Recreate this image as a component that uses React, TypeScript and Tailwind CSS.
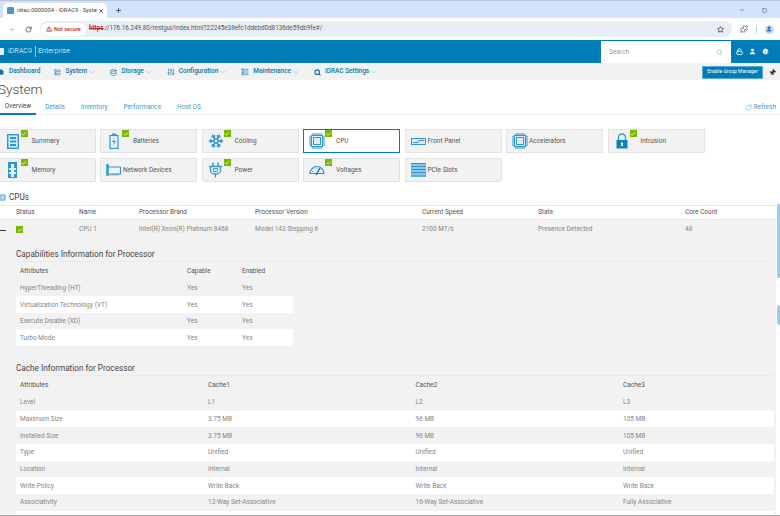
import { ReactNode } from "react";
import {
  ArrowRight,
  RotateCw,
  Star,
  Puzzle,
  Search,
  User,
  LockOpen,
  Info,
  Pin,
  ChevronDown,
  House,
  Database,
  SlidersVertical,
  LayoutList,
  Snowflake,
  Plus,
  X,
  Minus,
  Square,
  Check,
  TriangleAlert,
} from "lucide-react";

const blue = "#2f96d2";

const ChipIcon = ({ size = 16 }: { size?: number }) => (
  <svg width={size} height={size} viewBox="0 0 16 16" fill="none" stroke={blue}>
    <rect x="2.5" y="2.5" width="11" height="11" strokeWidth="1.2" />
    <rect x="4.5" y="4.5" width="7" height="7" strokeWidth="1" fill="#d9edf8" />
    <path d="M4 0v2M6 0v2M8 0v2M10 0v2M12 0v2M4 14v2M6 14v2M8 14v2M10 14v2M12 14v2M0 4h2M0 6h2M0 8h2M0 10h2M0 12h2M14 4h2M14 6h2M14 8h2M14 10h2M14 12h2" strokeWidth="1" />
  </svg>
);

const SummaryIcon = () => (
  <svg width="12" height="15" viewBox="0 0 12 15" fill="none">
    <rect x="0.7" y="0.7" width="10.6" height="13.6" stroke={blue} strokeWidth="1.4" fill="#d9edf8" />
    <path d="M3 4h6M3 7.500h6M3 11h6" stroke={blue} strokeWidth="2" />
  </svg>
);

const BatteryIcon = () => (
  <svg width="10" height="16" viewBox="0 0 10 16" fill="none">
    <rect x="3" y="0.5" width="4" height="2" fill={blue} />
    <rect x="1" y="2.5" width="8" height="13" stroke={blue} strokeWidth="1.2" fill="#eaf5fb" />
    <path d="M6 5 3 9h2l-1 4 3-5H5z" fill={blue} />
  </svg>
);

const MemoryIcon = () => (
  <svg width="9" height="16" viewBox="0 0 9 16">
    <rect x="0" y="0" width="9" height="16" fill={blue} />
    <path d="M3 2h3v4h2v2H6v2h2v2H6v3H3v-3H1v-2h2V8H1V6h2z" fill="#e4f2fa" />
  </svg>
);

const NetworkIcon = () => (
  <svg width="16" height="14" viewBox="0 0 16 14" fill="none" stroke={blue}>
    <path d="M1.5 2.5 3 4h11.500v7H4l-1 1.500" strokeWidth="1.100" />
    <rect x="0.500" y="1.500" width="2" height="11" fill={blue} strokeWidth="0.500" />
    <path d="M6 11v1.500M8 11v1.500M10 11v1.500M12 11v1.500" strokeWidth="1" />
  </svg>
);

const PowerIcon = () => (
  <svg width="15" height="16" viewBox="0 0 15 16" fill="none" stroke={blue}>
    <path d="M5 0.500v4M10 0.500v4" strokeWidth="1.500" />
    <path d="M1 4.500h13M2.500 4.500v3.500a4 4 0 0 0 4 4h2a4 4 0 0 0 4-4V4.500M7.500 12v3.500" strokeWidth="1.300" />
    <rect x="5.500" y="6.500" width="4" height="3" fill="#cfe7f5" strokeWidth="0.800" />
  </svg>
);

const GaugeIcon = () => (
  <svg width="16" height="12" viewBox="0 0 16 12" fill="none" stroke={blue}>
    <path d="M1 9.500a7 7 0 0 1 14 0z" strokeWidth="1.200" fill="#eaf5fb" />
    <path d="M11 4 7 11" strokeWidth="1.500" stroke="#1d6fa5" />
    <path d="M3 7.500h1.500M5 4.500l.8.800M8 3.500v1.300" strokeWidth="0.800" />
  </svg>
);

const FrontPanelIcon = () => (
  <svg width="15" height="7" viewBox="0 0 15 7" fill="none">
    <rect x="0.500" y="0.500" width="14" height="6" stroke={blue} fill="#d9edf8" />
    <path d="M2 4.500h5l1-2h5" stroke={blue} strokeWidth="1" />
  </svg>
);

const SlotsIcon = () => (
  <svg width="15" height="14" viewBox="0 0 15 14">
    <rect x="0" y="0" width="15" height="14" fill="#8cc5e6" />
    <path d="M0 .5h15M0 3.500h15M0 6.500h15M0 9.500h15M0 13h15" stroke={blue} strokeWidth="1.200" />
  </svg>
);

const LockIcon = () => (
  <svg width="12" height="16" viewBox="0 0 12 16" fill="none">
    <path d="M2.500 7V4.500a3.500 3.500 0 0 1 7 0V7" stroke={blue} strokeWidth="1.300" />
    <rect x="0.500" y="7" width="11" height="8.500" fill="#0a82c0" />
    <rect x="5" y="9.500" width="2" height="3.500" fill="#ffffff" />
  </svg>
);

const Badge = ({ className = "" }: { className?: string }) => (
  <span className={`flex h-[7px] w-[7px] items-center justify-center bg-[#7ab800] ${className}`}>
    <Check size={6} strokeWidth={3} className="text-white" />
  </span>
);

interface Card {
  label: string;
  icon: ReactNode;
  ok?: boolean;
  active?: boolean;
}

const cards: Card[] = [
  { label: "Summary", icon: <SummaryIcon />, ok: true },
  { label: "Batteries", icon: <BatteryIcon />, ok: true },
  { label: "Cooling", icon: <Snowflake size={16} color={blue} strokeWidth={2.2} />, ok: true },
  { label: "CPU", icon: <ChipIcon />, ok: true, active: true },
  { label: "Front Panel", icon: <FrontPanelIcon /> },
  { label: "Accelerators", icon: <ChipIcon /> },
  { label: "Intrusion", icon: <LockIcon />, ok: true },
  { label: "Memory", icon: <MemoryIcon />, ok: true },
  { label: "Network Devices", icon: <NetworkIcon /> },
  { label: "Power", icon: <PowerIcon />, ok: true },
  { label: "Voltages", icon: <GaugeIcon />, ok: true },
  { label: "PCIe Slots", icon: <SlotsIcon /> },
];

const navItems = [
  { label: "System", icon: <LayoutList size={7} /> },
  { label: "Storage", icon: <Database size={7} /> },
  { label: "Configuration", icon: <SlidersVertical size={8} /> },
  { label: "Maintenance", icon: <LayoutList size={8} /> },
  { label: "iDRAC Settings", icon: <Search size={7} strokeWidth={3.5} /> },
];

const capabilityRows = [
  "HyperThreading (HT)",
  "Virtualization Technology (VT)",
  "Execute Disable (XD)",
  "Turbo Mode",
];

const cacheRows = [
  ["Level", "L1", "L2", "L3"],
  ["Maximum Size", "3.75 MB", "96 MB", "105 MB"],
  ["Installed Size", "3.75 MB", "96 MB", "105 MB"],
  ["Type", "Unified", "Unified", "Unified"],
  ["Location", "Internal", "Internal", "Internal"],
  ["Write Policy", "Write Back", "Write Back", "Write Back"],
  ["Associativity", "12-Way Set-Associative", "16-Way Set-Associative", "Fully Associative"],
  ["", "", "", ""],
];

export default function App() {
  return (
    <div className="relative h-[516px] w-[780px] overflow-hidden bg-white font-['Roboto',sans-serif] text-[6.5px] text-[#858585]">
      {/* browser tab strip */}
      <div className="flex h-[18px] items-end border-t border-[#b9c4d6] bg-[#d3e3fd]">
        <div className="ml-[3px] flex h-[15px] w-[104px] items-center rounded-t-[5px] bg-white pl-[4px] pr-[3px] text-[#444]">
          <span className="h-[7px] w-[7px] shrink-0 rounded-[1px] bg-[#3f9bd0]" />
          <span className="ml-[3px] flex-1 whitespace-nowrap text-[5.800px]">idrac-0000004 - iDRAC9 - Syste</span>
          <X size={6} strokeWidth={3} className="shrink-0 text-[#333]" />
        </div>
        <Plus size={7} strokeWidth={2.5} className="mb-[4px] ml-[8px] text-[#333]" />
        <div className="mb-[5px] ml-auto flex items-center gap-[16.500px] pr-[13.500px] text-[#444]">
          <Minus size={6} />
          <Square size={5} />
        </div>
      </div>

      {/* url bar */}
      <div className="flex h-[22px] items-center bg-white">
        <ArrowRight size={7} className="ml-[8px] text-[#aaa]" />
        <RotateCw size={7} strokeWidth={2.5} className="ml-[10px] text-[#444]" />
        <div className="ml-[8px] flex h-[16px] w-[692px] items-center rounded-full bg-[#e9eef6] pr-[8px]">
          <div className="ml-[1px] flex h-[13px] w-[45px] items-center rounded-full bg-white pl-[5px] text-[5.500px] font-medium text-[#c5221f]">
            <TriangleAlert size={6} strokeWidth={3} />
            <span className="ml-[2px]">Not secure</span>
          </div>
          <span className="ml-[3px] text-[6.300px] text-[#555]">
            <span className="font-medium text-[#c5221f] line-through">https</span>
            ://176.16.249.80/restgui/index.html?22245e38efc1ddebd0d8136de59db9fe#/
          </span>
          <Star size={7} strokeWidth={2.500} className="ml-auto text-[#333]" />
        </div>
        <Puzzle size={8} className="ml-[8px] text-[#444]" />
        <span className="ml-[8px] h-[8px] w-px bg-[#c8d0dc]" />
        <span className="ml-[7.500px] flex h-[9px] w-[9px] items-center justify-center rounded-full bg-[#c2d7f7]">
          <User size={6} fill="#1a56c4" className="text-[#1a56c4]" />
        </span>
      </div>

      {/* iDRAC header */}
      <div className="flex h-[23px] items-center bg-[#007db8] text-white">
        <span className="ml-[-3px] h-[7px] w-[7px] rounded-[1px] bg-white/90" />
        <span className="ml-[4px] text-[7.200px] font-light">iDRAC9</span>
        <span className="mx-[2.500px] h-[11px] w-px bg-white/60" />
        <span className="text-[7.200px] font-light">Enterprise</span>
        <div className="ml-auto flex h-[22px] w-[130px] items-center justify-between self-end bg-white pl-[8px] pr-[8px] pt-[1.500px] text-[6.500px] text-[#999]">
          Search
          <Search size={7} strokeWidth={2} className="text-[#6db6dc]" />
        </div>
        <div className="ml-[5px] flex w-[44px] items-center gap-[6px]">
          <LockOpen size={7} strokeWidth={3} />
          <User size={7} fill="#ffffff" />
          <Info size={7} fill="#ffffff" className="text-[#007db8]" />
        </div>
      </div>

      {/* main nav */}
      <div className="flex h-[17px] items-center bg-[#f2f2f2] pt-[1px] text-[6.500px] font-medium text-[#0a76ad]">
        <div className="ml-[-2px] flex items-center gap-[5px]">
          <House size={6} fill="#0a76ad" />
          <span>Dashboard</span>
        </div>
        <div className="ml-[14px] flex items-center gap-[13px]">
          {navItems.map((item) => (
            <div key={item.label} className="flex items-center">
              {item.icon}
              <span className="ml-[4px]">{item.label}</span>
              <ChevronDown size={10} strokeWidth={1} className="text-[#6aa9cc]" />
            </div>
          ))}
        </div>
        <button className="ml-auto flex h-[13px] w-[61px] items-center justify-center border border-[#5aaad4] bg-[#007db8] text-[5px] font-normal text-white">
          Enable Group Manager
        </button>
        <Pin size={7} fill="#333333" className="ml-[6px] mr-[4px] rotate-45 text-[#333]" />
      </div>

      {/* page title */}
      <h1 className="ml-[-2px] flex h-[20px] items-center text-[13.500px] font-light leading-none text-[#444]">System</h1>

      {/* sub tabs */}
      <div className="flex h-[15px] items-center border-b border-[#efefef] text-[6.500px] text-[#4a95bf]">
        <span className="flex h-[15px] w-[36px] items-center justify-center border-b-2 border-[#007db8] pt-[2px] text-[#444]">Overview</span>
        <span className="ml-[9px] pt-[2px]">Details</span>
        <span className="ml-[16px] pt-[2px]">Inventory</span>
        <span className="ml-[16px] pt-[2px]">Performance</span>
        <span className="ml-[16px] pt-[2px]">Host OS</span>
        <span className="ml-auto flex items-center gap-[2px] pr-[4px] pt-[1px] text-[6.500px]">
          <RotateCw size={7} className="text-[#6db6dc]" />
          Refresh
        </span>
      </div>

      {/* hardware tiles */}
      <div className="ml-[-1.500px] mt-[14px] grid w-[710px] grid-cols-[repeat(7,97px)] gap-x-[4.500px] gap-y-[5px]">
        {cards.map((card) => (
          <div
            key={card.label}
            className={`relative flex h-[24px] items-center border-[1.500px] pl-[5px] text-[6.500px] text-[#555] ${
              card.active ? "border-[#007db8] bg-white" : "border-[#e3e3e3] bg-[#f2f2f2]"
            }`}
          >
            <span className="flex w-[16px] shrink-0 items-center justify-center">{card.icon}</span>
            <span className={card.ok ? "ml-[11px] pt-[1px]" : "ml-[1px] pt-[1px]"}>{card.label}</span>
            {card.ok && <Badge className="absolute left-[21px] top-[0px]" />}
          </div>
        ))}
      </div>

      {/* CPUs */}
      <div className="ml-[-1px] mt-[8px] flex h-[15px] items-center gap-[2px] text-[8.200px] text-[#444]">
        <ChipIcon size={7} />
        <span className="ml-[1px]">CPUs</span>
      </div>
      <div className="grid h-[15px] grid-cols-[16px_63px_60px_116px_167px_116px_147px_1fr] items-center border-y border-[#e8e8e8] text-[#555]">
        <span />
        <span>Status</span>
        <span>Name</span>
        <span>Processor Brand</span>
        <span>Processor Version</span>
        <span>Current Speed</span>
        <span>State</span>
        <span>Core Count</span>
      </div>
      <div className="w-[776px] bg-[#f2f2f2]">
        <div className="grid h-[20px] grid-cols-[16px_63px_60px_116px_167px_116px_147px_1fr] items-center">
          <span className="h-px w-[6px] bg-[#333]" />
          <Badge className="mt-[-1px]" />
          <span>CPU 1</span>
          <span>Intel(R) Xeon(R) Platinum 8468</span>
          <span>Model 143 Stepping 6</span>
          <span>2100 MT/s</span>
          <span>Presence Detected</span>
          <span>48</span>
        </div>

        {/* capabilities */}
        <div className="pl-[16px] pr-[2px]">
          <h2 className="mt-[7px] flex h-[15px] items-center border-b border-[#ebebeb] text-[8.200px] text-[#444]">
            Capabilities Information for Processor
          </h2>
          <div className="grid h-[17.500px] w-[277px] grid-cols-[167px_55px_1fr] items-center pl-[4px] pt-[2px] text-[#555]">
            <span>Attributes</span>
            <span>Capable</span>
            <span>Enabled</span>
          </div>
          {capabilityRows.map((row, i) => (
            <div
              key={row}
              className={`grid h-[16.600px] w-[277px] grid-cols-[167px_55px_1fr] items-center pl-[4px] pt-[2px] ${i % 2 ? "bg-white" : ""}`}
            >
              <span>{row}</span>
              <span>Yes</span>
              <span>Yes</span>
            </div>
          ))}

          {/* cache */}
          <h2 className="mt-[15.500px] flex h-[15px] items-center border-b border-[#ebebeb] text-[8.200px] text-[#444]">
            Cache Information for Processor
          </h2>
          <div className="grid h-[17.500px] grid-cols-[188px_207.500px_207.500px_1fr] items-center pl-[4px] pt-[1px] text-[#555]">
            <span>Attributes</span>
            <span>Cache1</span>
            <span>Cache2</span>
            <span>Cache3</span>
          </div>
          {cacheRows.map((row, i) => (
            <div
              key={i}
              className={`grid h-[16.700px] grid-cols-[188px_207.500px_207.500px_1fr] items-center pl-[4px] pt-[2px] ${i % 2 ? "bg-white" : ""}`}
            >
              {row.map((cell, c) => (
                <span key={c}>{cell}</span>
              ))}
            </div>
          ))}
        </div>
      </div>

      {/* scroll handles and window edge */}
      <span className="absolute left-[776.500px] top-[204px] h-[74px] w-[5px] rounded-l-[2px] bg-[#9fcfe6]" />
      <span className="absolute left-[776.500px] top-[305px] h-[20px] w-[5px] rounded-l-[2px] bg-[#9fcfe6]" />
      <span className="absolute bottom-0 left-0 h-[1.500px] w-full bg-[#a8a8a8]" />
    </div>
  );
}
